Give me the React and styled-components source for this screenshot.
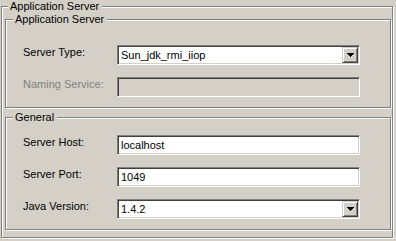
import React from 'react'
import styled, {createGlobalStyle} from 'styled-components'

const Global = createGlobalStyle`
    html, body {
        margin: 0;
        padding: 0;
        background: #d4d0c8;
    }
    body {
        font-family: "Liberation Sans", Arial, sans-serif;
        font-size: 11px;
        color: #000;
    }
`;

const Page = styled.div`
    width: 396px;
    height: 241px;
    box-sizing: border-box;
    padding: 0 3px 0 1px;
    background: #d4d0c8;
`;

// etched border: grey line with a white one offset by 1px
const Group = styled.fieldset`
    margin: ${p => p.$gap || 0}px 0 0;
    padding: 0;
    min-width: 0;
    border: 1px solid #808080;
    box-shadow: inset 1px 1px 0 #fff, 1px 1px 0 #fff;
`;

const Legend = styled.legend`
    margin-left: ${p => p.$indent}px;
    padding: 0 3px 0 2px;
    line-height: 13px;
    background: #d4d0c8;
`;

const Stack = styled.div`
    display: flex;
    flex-direction: column;
    padding: 0 1px 7px 3px;
`;

const Form = styled.div`
    display: grid;
    grid-template-columns: 94px 243px;
    row-gap: 12px;
    padding: ${p => p.$top}px 0 10px 17px;
`;

const Label = styled.div`
    padding-top: 1px;
    line-height: 13px;
    white-space: nowrap;
    color: ${p => p.$disabled ? '#808080' : '#000'};
`;

const Field = styled.div`
    box-sizing: border-box;
    width: 243px;
    height: 20px;
    display: flex;
    padding: 1px;
    border: 1px solid;
    border-color: #808080 #fff #fff #808080;
    box-shadow: inset 1px 1px 0 #404040, inset -1px -1px 0 #d4d0c8;
    background: ${p => p.$disabled ? '#d4d0c8' : '#fff'};
`;

const Value = styled.div`
    flex: 1;
    padding: 2px 2px 0;
    line-height: 13px;
    white-space: nowrap;
    overflow: hidden;
`;

const DropButton = styled.div`
    box-sizing: border-box;
    width: 16px;
    height: 16px;
    display: flex;
    align-items: center;
    justify-content: center;
    background: #d4d0c8;
    border: 1px solid;
    border-color: #d4d0c8 #404040 #404040 #d4d0c8;
    box-shadow: inset 1px 1px 0 #fff, inset -1px -1px 0 #808080;
`;

const Arrow = () => (
    <svg width="7" height="4" viewBox="0 0 7 4" shapeRendering="crispEdges">
        <path d="M0 0h7v1h-1v1h-1v1h-1v1h-1v-1h-1v-1h-1v-1h-1z" fill="#000"/>
    </svg>
);

const TextRow = ({label, value, disabled}) => <>
    <Label $disabled={disabled}>{label}</Label>
    <Field $disabled={disabled}>
        <Value>{value}</Value>
    </Field>
</>;

const ComboRow = ({label, value}) => <>
    <Label>{label}</Label>
    <Field>
        <Value>{value}</Value>
        <DropButton><Arrow/></DropButton>
    </Field>
</>;

const App = () => <>
    <Global/>
    <Page>
        <Group>
            <Legend $indent={6}>Application Server</Legend>
            <Stack>
                <Group>
                    <Legend $indent={7}>Application Server</Legend>
                    <Form $top={19}>
                        <ComboRow label="Server Type:" value="Sun_jdk_rmi_iiop"/>
                        <TextRow label="Naming Service:" value="" disabled/>
                    </Form>
                </Group>
                <Group $gap={3}>
                    <Legend $indent={7}>General</Legend>
                    <Form $top={11}>
                        <TextRow label="Server Host:" value="localhost"/>
                        <TextRow label="Server Port:" value="1049"/>
                        <ComboRow label="Java Version:" value="1.4.2"/>
                    </Form>
                </Group>
            </Stack>
        </Group>
    </Page>
</>;

export default App;
